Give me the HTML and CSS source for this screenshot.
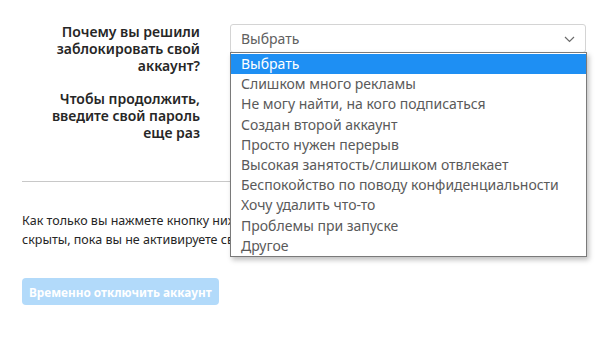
FILE: index.html
```html
<!DOCTYPE html>
<html lang="ru">
<head>
<meta charset="utf-8">
<link rel="stylesheet" href="styles.css">
</head>
<body>
<div class="page">
  <div class="form-row">
    <div class="label">Почему вы решили<br>заблокировать свой<br>аккаунт?</div>
    <div class="field">
      <div class="select">
        <span>Выбрать</span>
        <svg class="chev" width="11" height="7" viewBox="0 0 11 7"><path d="M1 1l4.5 4.5L10 1" fill="none" stroke="#6b6b6b" stroke-width="1.2"/></svg>
      </div>
      <ul class="dropdown">
        <li class="active">Выбрать</li>
        <li>Слишком много рекламы</li>
        <li>Не могу найти, на кого подписаться</li>
        <li>Создан второй аккаунт</li>
        <li>Просто нужен перерыв</li>
        <li>Высокая занятость/слишком отвлекает</li>
        <li>Беспокойство по поводу конфиденциальности</li>
        <li>Хочу удалить что-то</li>
        <li>Проблемы при запуске</li>
        <li>Другое</li>
      </ul>
    </div>
  </div>
  <div class="form-row second">
    <div class="label">Чтобы продолжить,<br>введите свой пароль<br>еще раз</div>
    <div class="field"></div>
  </div>
  <hr class="divider">
  <p class="note">Как только вы нажмете кнопку ниже, ваши фото, комментарии и отметки «Нравится» будут<br>скрыты, пока вы не активируете свой аккаунт, снова выполнив вход.</p>
  <button class="btn" disabled>Временно отключить аккаунт</button>
</div>
</body>
</html>
```
FILE: styles.css
```css
html, body { margin: 0; padding: 0; background: #fff; }
body { font-family: "Noto Sans", "Open Sans", sans-serif; color: #262626; }
.page { padding: 23px 14px 0 22px; width: 564px; overflow: hidden; height: 319px; }
.form-row { display: grid; grid-template-columns: 178px 356px; column-gap: 30px; }
.form-row.second { margin-top: 16px; }
.label { font-size: 14px; font-weight: 600; line-height: 17px; text-align: right; color: #262626; white-space: nowrap; }
.field { position: relative; }
.select { border: 1px solid #d4d4d4; border-radius: 3px; display: flex; align-items: center; justify-content: space-between; padding: 0 10px; font-size: 14px; color: #606060; box-sizing: border-box; height: 29px; margin-top: 1px; }
.chev { margin-top: 1px; }
.dropdown { position: absolute; left: 0; top: 29px; width: 357px; box-sizing: border-box; margin: 0; padding: 1px 0 0; list-style: none; background: #fff; border: 1px solid #7a7a7a; box-shadow: 2px 3px 5px rgba(0,0,0,0.25); z-index: 2; }
.dropdown li { font-size: 14px; line-height: 20.2px; height: 20.2px; padding-left: 10px; color: #5a5a5a; white-space: nowrap; }
.dropdown li.active { background: #1e8ff3; color: #fff; }
.divider { border: 0; border-top: 1px solid #c8c8c8; margin: 40px 0 0; width: 564px; }
.note { font-size: 12.5px; line-height: 19px; color: #262626; margin: 29px 0 0; white-space: nowrap; }
.btn { display: block; margin-top: 29px; font-family: inherit; font-size: 11.8px; font-weight: 700; color: #fff; background: #b2dafa; border: 0; border-radius: 4px; height: 27px; padding: 0 7px; }
```
